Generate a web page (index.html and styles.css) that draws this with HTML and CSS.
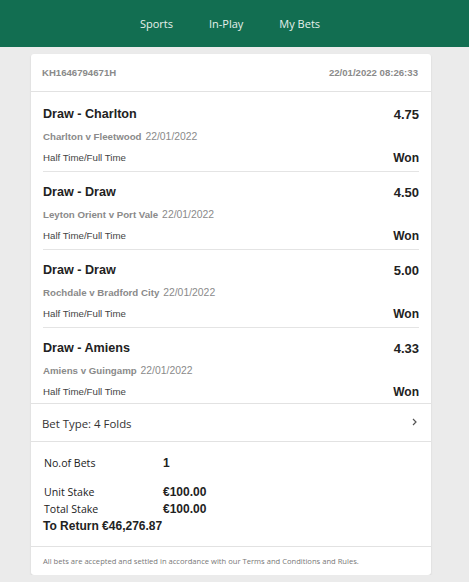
FILE: index.html
```html
<!DOCTYPE html>
<html lang="en">
<head>
  <meta charset="UTF-8">
  <title>My Bets</title>
  <link rel="stylesheet" href="styles.css">
</head>
<body>
  <header class="topbar">
    <nav class="nav">
      <a href="#">Sports</a>
      <a href="#">In-Play</a>
      <a href="#">My Bets</a>
    </nav>
  </header>

  <main class="card">
    <div class="card-head">
      <span>KH1646794671H</span>
      <span>22/01/2022 08:26:33</span>
    </div>

    <div class="legs">
      <div class="leg">
        <div class="row title"><span>Draw - Charlton</span><span>4.75</span></div>
        <div class="event"><b>Charlton v Fleetwood</b> 22/01/2022</div>
        <div class="row meta"><span>Half Time/Full Time</span><span class="won">Won</span></div>
      </div>
      <div class="leg">
        <div class="row title"><span>Draw - Draw</span><span>4.50</span></div>
        <div class="event"><b>Leyton Orient v Port Vale</b> 22/01/2022</div>
        <div class="row meta"><span>Half Time/Full Time</span><span class="won">Won</span></div>
      </div>
      <div class="leg">
        <div class="row title"><span>Draw - Draw</span><span>5.00</span></div>
        <div class="event"><b>Rochdale v Bradford City</b> 22/01/2022</div>
        <div class="row meta"><span>Half Time/Full Time</span><span class="won">Won</span></div>
      </div>
      <div class="leg">
        <div class="row title"><span>Draw - Amiens</span><span>4.33</span></div>
        <div class="event"><b>Amiens v Guingamp</b> 22/01/2022</div>
        <div class="row meta"><span>Half Time/Full Time</span><span class="won">Won</span></div>
      </div>
    </div>

    <div class="bet-type">
      <span>Bet Type: 4 Folds</span>
      <svg class="chev" width="5" height="8" viewBox="0 0 5 8"><path d="M1 1l3 3-3 3" fill="none" stroke="#555" stroke-width="1.2"/></svg>
    </div>

    <div class="summary">
      <div class="line count"><span class="label">No.of Bets</span><span class="value">1</span></div>
      <div class="line"><span class="label">Unit Stake</span><span class="value">&euro;100.00</span></div>
      <div class="line"><span class="label">Total Stake</span><span class="value">&euro;100.00</span></div>
      <div class="return">To Return &euro;46,276.87</div>
    </div>

    <div class="note">All bets are accepted and settled in accordance with our Terms and Conditions and Rules.</div>
  </main>
</body>
</html>
```

FILE: styles.css
```css
body {
  margin: 0;
  background: #ebebeb;
  font-family: 'Liberation Sans', Arial, sans-serif;
  color: #222;
}

.topbar {
  height: 47px;
  background: #126e51;
  display: flex;
  align-items: center;
  justify-content: center;
}

.nav {
  display: flex;
  gap: 36px;
  margin-right: 9px;
}

.nav a {
  color: #e6f0ec;
  text-decoration: none;
  font-family: 'Open Sans', sans-serif;
  font-size: 11px;
}

.card {
  width: 400px;
  margin: 7px 0 0 31px;
  background: #fff;
  border-radius: 3px;
  box-shadow: 0 1px 2px rgba(0, 0, 0, 0.12);
}

.card-head {
  height: 37px;
  padding: 0 13px 0 11px;
  display: flex;
  justify-content: space-between;
  align-items: center;
  border-bottom: 1px solid #e2e2e2;
  font-size: 9.6px;
  font-weight: bold;
  color: #8a8a8a;
}

.legs {
  padding-top: 2px;
  border-bottom: 1px solid #e2e2e2;
}

.leg {
  margin: 0 12px;
  padding: 12px 0 6px;
  border-bottom: 1px solid #e4e4e4;
}

.leg:last-child {
  border-bottom: none;
  padding-bottom: 4px;
}

.row {
  display: flex;
  justify-content: space-between;
  align-items: center;
}

.title {
  height: 16px;
  font-size: 12.6px;
  font-weight: bold;
  color: #222;
}

.title span:last-child {
  font-size: 13px;
}

.event {
  margin-top: 6px;
  height: 16px;
  line-height: 18px;
  font-size: 10.4px;
  color: #8a8a8a;
}

.event b {
  font-size: 9.7px;
  margin-right: 1px;
}

.meta {
  margin-top: 5px;
  height: 16px;
  font-size: 9.7px;
  color: #444;
}

.won {
  font-size: 12px;
  font-weight: bold;
  color: #222;
  padding-top: 1px;
}

.bet-type {
  height: 36px;
  padding: 1px 14px 0 11px;
  display: flex;
  justify-content: space-between;
  align-items: center;
  border-bottom: 1px solid #e2e2e2;
  font-family: 'Open Sans', sans-serif;
  font-size: 11.4px;
  color: #333;
}

.chev {
  margin-top: -3px;
}

.summary {
  padding: 13px 12px 11px;
  border-bottom: 1px solid #e2e2e2;
}

.line {
  display: flex;
  height: 17px;
  align-items: center;
}

.line.count {
  height: 16px;
  margin-bottom: 12px;
}

.label {
  width: 119px;
  padding-left: 1px;
  font-family: 'Open Sans', sans-serif;
  font-size: 10.6px;
  color: #222;
}

.value {
  font-size: 12px;
  font-weight: bold;
  color: #222;
}

.return {
  margin-top: 1px;
  height: 17px;
  line-height: 17px;
  font-size: 12px;
  font-weight: bold;
  color: #222;
}

.note {
  height: 28px;
  display: flex;
  align-items: center;
  padding-left: 12px;
  font-family: 'Open Sans', sans-serif;
  font-size: 7.6px;
  color: #777;
}
```
